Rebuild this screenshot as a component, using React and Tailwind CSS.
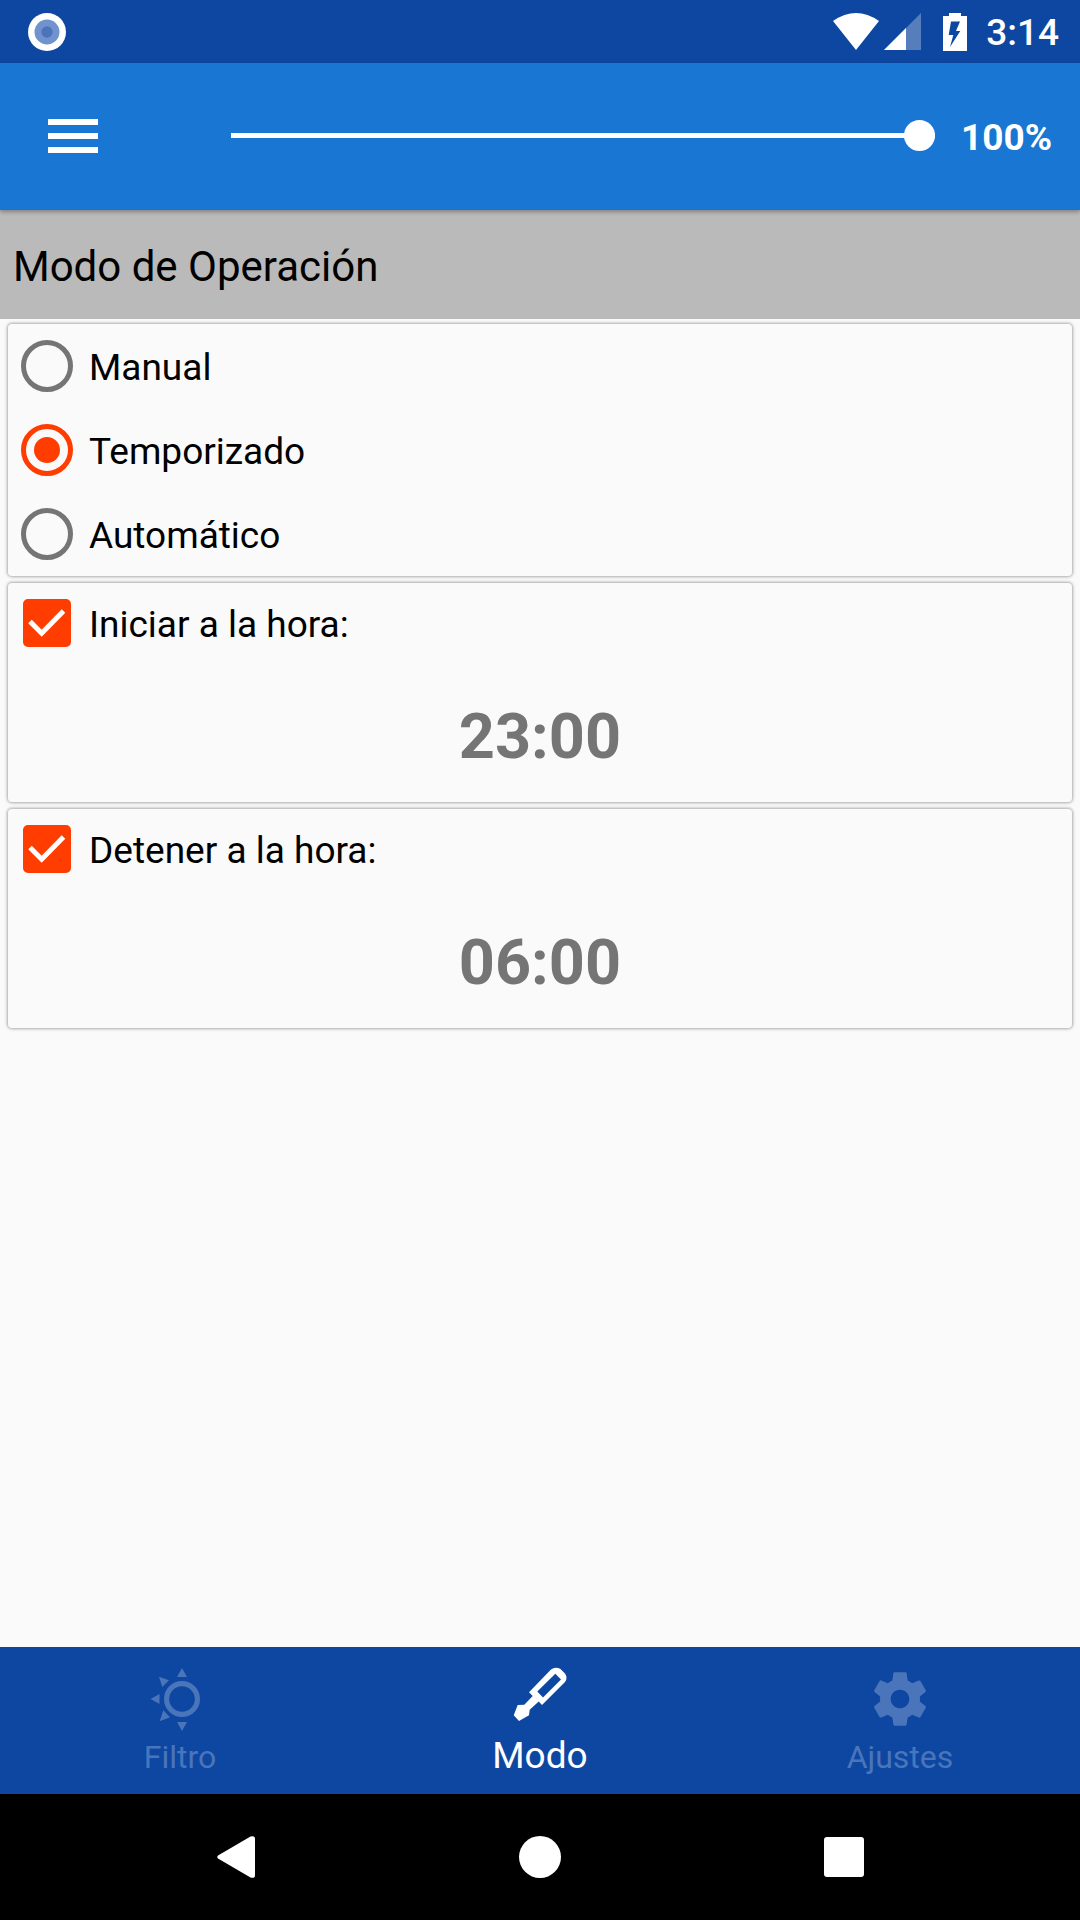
import { useState } from 'react';
import clsx from 'clsx';

const MODES = [
  { id: 'manual', label: 'Manual' },
  { id: 'timed', label: 'Temporizado' },
  { id: 'auto', label: 'Automático' },
];

const CARD = 'rounded-[4px] bg-[#fafafa] shadow-[0_0_3px_1px_rgba(0,0,0,0.32)]';

function SunIcon() {
  return (
    <svg viewBox="0 0 64 64" className="size-16" fill="currentColor" aria-hidden="true">
      <circle cx="34" cy="32" r="15.4" fill="none" stroke="currentColor" strokeWidth="5.2" />
      <path d="M34 1l5 9H29zM34 64l5-9H29zM2.500 32l9-5v10zM11 9.700l10 3.600-6.700 6.700zM11.700 54.300l10.300-4-6.700-7z" />
    </svg>
  );
}

function ScrewdriverIcon() {
  return (
    <svg viewBox="0 0 64 64" className="size-16" fill="currentColor" aria-hidden="true">
      <path
        fillRule="evenodd"
        d="M21 25.300L43 2.500Q47.500-.500 52.500 2L57 6.500Q60 11 57 15L34 38l-3.300-3.500-9 8.200-.7 5.600L11 54l-5.300-5.700L9.700 38l6.600-.3 8.400-8.700zM47.300 6.700L29.300 24.500 35 30.500 53 12.500z"
      />
    </svg>
  );
}

function GearIcon() {
  return (
    <svg viewBox="0 0 24 24" className="size-16" fill="currentColor" aria-hidden="true">
      <path d="M19.43 12.98c.04-.32.07-.64.07-.98s-.03-.66-.07-.98l2.11-1.65c.19-.15.24-.42.12-.64l-2-3.46c-.12-.22-.39-.3-.61-.22l-2.49 1c-.52-.4-1.08-.73-1.69-.98l-.38-2.65C14.46 2.18 14.25 2 14 2h-4c-.25 0-.46.18-.49.42l-.38 2.65c-.61.25-1.17.59-1.69.98l-2.49-1c-.23-.09-.49 0-.61.22l-2 3.46c-.13.22-.07.49.12.64l2.110 1.65c-.04.32-.07.65-.07.98s.03.66.07.98l-2.110 1.65c-.19.15-.24.42-.12.64l2 3.46c.12.22.39.3.61.22l2.49-1c.52.4 1.08.73 1.69.98l.38 2.65c.03.24.24.42.49.42h4c.25 0 .46-.18.49-.42l.38-2.65c.61-.25 1.17-.59 1.69-.98l2.49 1c.23.09.49 0 .61-.22l2-3.46c.12-.22.07-.49-.12-.64l-2.110-1.65zM12 15.5c-1.93 0-3.5-1.57-3.5-3.5s1.57-3.5 3.5-3.5 3.5 1.57 3.5 3.5-1.57 3.5-3.5 3.5z" />
    </svg>
  );
}

const TABS = [
  { id: 'filtro', label: 'Filtro', icon: <SunIcon /> },
  { id: 'modo', label: 'Modo', icon: <ScrewdriverIcon /> },
  { id: 'ajustes', label: 'Ajustes', icon: <GearIcon /> },
];

function StatusBar() {
  return (
    <div className="flex h-[63px] items-center bg-[#0d47a1] pr-[21px] pl-7 text-white">
      <svg viewBox="0 0 38 38" className="size-[38px]" aria-hidden="true">
        <circle cx="19" cy="19" r="19" fill="#fff" />
        <circle cx="19" cy="19" r="12.500" fill="#7093ce" />
        <circle cx="19" cy="19" r="5.700" fill="#4b74bb" />
      </svg>
      <div className="ml-auto flex items-center">
        <svg viewBox="0 0 46 37" className="h-[37px] w-[46px]" fill="currentColor" aria-hidden="true">
          <path d="M0 8Q23-8 46 8L23 37z" />
        </svg>
        <svg viewBox="0 0 37 37" className="ml-[5px] size-[37px]" fill="currentColor" aria-hidden="true">
          <path d="M37 0v37H0z" opacity=".3" />
          <path d="M22 15v22H0z" />
        </svg>
        <svg viewBox="0 0 24 38" className="ml-[22px] h-[38px] w-6" fill="currentColor" aria-hidden="true">
          <path fillRule="evenodd" d="M6 0h12v3h6v35H0V3h6zM8 8.500L5.700 22h4.600L7 34l10.300-16H13l4-9.500z" />
        </svg>
        <span className="ml-[19px] pt-[2px] text-[37px] leading-[44px] font-medium">3:14</span>
      </div>
    </div>
  );
}

function AppBar() {
  const [level, setLevel] = useState(100);

  return (
    <header className="relative flex h-[147px] items-center bg-[#1976d2] pr-7 pb-[2px] pl-12 text-white shadow-[0_2px_4px_rgba(0,0,0,0.3)]">
      <button type="button" aria-label="Menú" className="flex w-[50px] flex-col gap-2">
        <span className="h-[6px] bg-white" />
        <span className="h-[6px] bg-white" />
        <span className="h-[6px] bg-white" />
      </button>
      <input
        type="range"
        min="0"
        max="100"
        value={level}
        onChange={(e) => setLevel(Number(e.target.value))}
        aria-label="Intensidad"
        className="ml-[133px] h-8 min-w-0 flex-1 appearance-none bg-transparent [&::-webkit-slider-runnable-track]:h-[5px] [&::-webkit-slider-runnable-track]:bg-white [&::-webkit-slider-thumb]:-mt-[13px] [&::-webkit-slider-thumb]:size-[31px] [&::-webkit-slider-thumb]:appearance-none [&::-webkit-slider-thumb]:rounded-full [&::-webkit-slider-thumb]:bg-white"
      />
      <output className="ml-[26px] pt-1 text-[37px] leading-[44px] font-bold">{level}%</output>
    </header>
  );
}

function ModeCard() {
  const [mode, setMode] = useState('timed');

  return (
    <div role="radiogroup" aria-labelledby="mode-title" className={CARD}>
      {MODES.map((m) => (
        <label key={m.id} className="flex h-[84px] items-center gap-4 pl-[13px]">
          <input
            type="radio"
            name="mode"
            checked={mode === m.id}
            onChange={() => setMode(m.id)}
            className="grid size-[52px] appearance-none place-items-center rounded-full border-[5px] border-[#757575] before:size-[26px] before:rounded-full checked:border-[#ff3d00] checked:before:bg-[#ff3d00]"
          />
          <span className="pt-1 text-[37px] leading-[44px]">{m.label}</span>
        </label>
      ))}
    </div>
  );
}

function TimeCard({ label, time }) {
  const [on, setOn] = useState(true);

  return (
    <section className={CARD}>
      <label className="flex h-20 items-center gap-[18px] pl-[15px]">
        <span className="grid size-12">
          <input
            type="checkbox"
            checked={on}
            onChange={() => setOn(!on)}
            className="col-start-1 row-start-1 size-12 appearance-none rounded-[5px] border-[5px] border-[#757575] checked:border-[#ff3d00] checked:bg-[#ff3d00]"
          />
          <svg viewBox="0 0 48 48" className="pointer-events-none col-start-1 row-start-1 size-12" aria-hidden="true">
            <path d="M7 22.500L18.700 34.200 40.500 12" fill="none" stroke="#fff" strokeWidth="5" />
          </svg>
        </span>
        <span className="pt-1 text-[37px] leading-[44px]">{label}</span>
      </label>
      <button type="button" className="block h-[139px] w-full pt-2 text-[63px] leading-[74px] font-bold text-[#757575]">
        {time}
      </button>
    </section>
  );
}

function TabBar() {
  return (
    <nav className="grid h-[147px] grid-cols-3 bg-[#0d47a1] pt-5">
      {TABS.map((tab) => {
        const active = tab.id === 'modo';
        return (
          <a
            key={tab.id}
            href={`#${tab.id}`}
            aria-current={active ? 'page' : undefined}
            className={clsx('flex flex-col items-center', active ? 'text-white' : 'text-[#4a75bb]')}
          >
            {tab.icon}
            <span className={active ? 'text-[37px] leading-[50px]' : 'text-[32px] leading-[52px]'}>{tab.label}</span>
          </a>
        );
      })}
    </nav>
  );
}

function SystemNav() {
  return (
    <div className="grid h-[126px] grid-cols-3 place-items-center bg-black px-[84px] text-white">
      <button type="button" aria-label="Atrás">
        <svg viewBox="0 0 38 42" className="h-[42px] w-[38px]" fill="currentColor" aria-hidden="true">
          <path d="M1 19.500L33.500.600Q38-1 38 3v36q0 4-4.500 2.400L1 22.500q-1.500-1.500 0-3z" />
        </svg>
      </button>
      <button type="button" aria-label="Inicio" className="size-[42px] rounded-full bg-white" />
      <button type="button" aria-label="Recientes" className="size-10 rounded-[3px] bg-white" />
    </div>
  );
}

export default function App() {
  return (
    <div className="flex min-h-screen flex-col bg-[#fafafa] font-[Roboto,sans-serif] text-black">
      <StatusBar />
      <AppBar />
      <main className="flex-1">
        <h1 id="mode-title" className="bg-[#bababa] px-[13px] pt-8 pb-7 text-[42px] leading-[49px]">
          Modo de Operación
        </h1>
        <div className="flex flex-col gap-[7px] px-2 pt-[5px]">
          <ModeCard />
          <TimeCard label="Iniciar a la hora:" time="23:00" />
          <TimeCard label="Detener a la hora:" time="06:00" />
        </div>
      </main>
      <TabBar />
      <SystemNav />
    </div>
  );
}
